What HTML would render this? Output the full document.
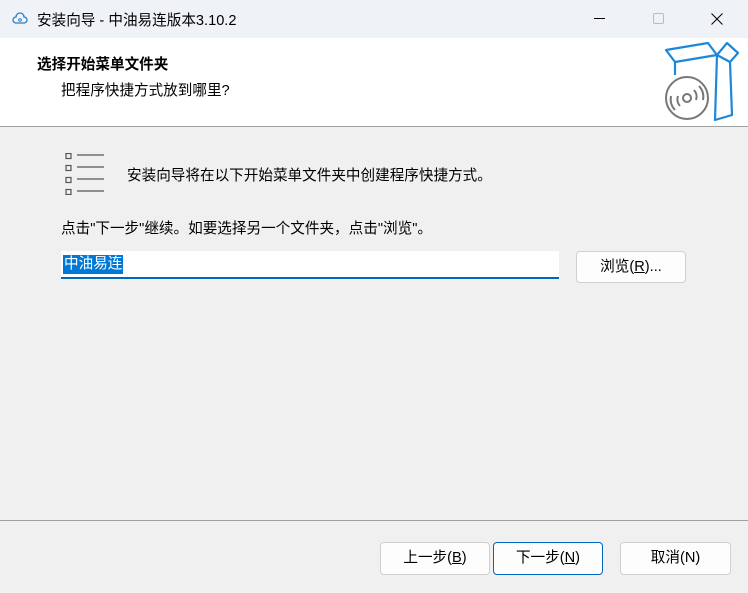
<!DOCTYPE html><html><head><meta charset="utf-8"><style>
*{margin:0;padding:0;box-sizing:border-box}
body{width:748px;height:593px;background:#f0f0f0;font-family:"Liberation Sans","Noto Sans CJK SC",sans-serif;font-size:14.6px;color:#000;position:relative;overflow:hidden}
.a{position:absolute;white-space:nowrap}
.btn{position:absolute;background:#fdfdfd;border:1px solid #d0d0d0;border-radius:4px;text-align:center;line-height:30px;font-size:14.6px}
</style></head><body>
<div class="a" style="left:0;top:0;width:748px;height:38px;background:#eff2f7"></div>
<svg class="a" style="left:12px;top:11px" width="16" height="16" viewBox="0 0 16 16"><path d="M4 12a3 3 0 0 1 0-6a4 4 0 0 1 8 0a3 3 0 0 1 0 6z" fill="none" stroke="#2a7fc9" stroke-width="1.3"/><circle cx="8" cy="9" r="1.3" fill="none" stroke="#2a7fc9"/></svg>
<div class="a" style="left:37px;top:9px">安装向导 - 中油易连版本3.10.2</div>
<div class="a" style="left:594px;top:18px;width:11px;height:1px;background:#000"></div>
<div class="a" style="left:653px;top:13px;width:11px;height:11px;border:1px solid #bbb;border-radius:2px"></div>
<svg class="a" style="left:711px;top:13px" width="12" height="12"><path d="M0.5 0.5L11.5 11.5M11.5 0.5L0.5 11.5" stroke="#000" stroke-width="1"/></svg>
<div class="a" style="left:0;top:38px;width:748px;height:89px;background:#fff;border-bottom:1px solid #a0a0a0"></div>
<div class="a" style="left:37px;top:53px;font-weight:bold">选择开始菜单文件夹</div>
<div class="a" style="left:61px;top:79px">把程序快捷方式放到哪里?</div>
<svg class="a" style="left:660px;top:38px" width="88" height="88" viewBox="0 0 88 88"><g fill="none" stroke="#1e88d8" stroke-width="2.2" stroke-linejoin="round"><path d="M6 12L48 5L57 17L15 24Z"/><path d="M57 17L67 5L78 15L70 24Z"/><path d="M57 17L55 82L72 77L70 24"/><path d="M15 24L15 37"/></g><g fill="none" stroke="#777" stroke-width="2"><circle cx="27" cy="60" r="21" fill="#fff"/><circle cx="27" cy="60" r="4"/><path d="M20 68a10 10 0 0 1-2-10M15 72a16 16 0 0 1-4-14M34 52a10 10 0 0 1 2 10M39 48a16 16 0 0 1 4 14"/></g></svg>
<svg class="a" style="left:64px;top:153px" width="42" height="42"><g fill="none" stroke="#555" stroke-width="1.2"><rect x="2" y="0.5" width="5" height="5"/><rect x="2" y="12.5" width="5" height="5"/><rect x="2" y="24.5" width="5" height="5"/><rect x="2" y="36.5" width="5" height="5"/></g><g stroke="#555" stroke-width="1.2"><path d="M13 2H40M13 14H40M13 26H40M13 38H40"/></g></svg>
<div class="a" style="left:127px;top:164px">安装向导将在以下开始菜单文件夹中创建程序快捷方式。</div>
<div class="a" style="left:61px;top:217px">点击"下一步"继续。如要选择另一个文件夹，点击"浏览"。</div>
<div class="a" style="left:61px;top:251px;width:498px;height:28px;background:#fff;border-bottom:2px solid #0067c0"></div>
<div class="a" style="left:63px;top:255px;background:#0078d7;color:#fff;padding:0 1px;line-height:19px">中油易连</div>
<div class="btn" style="left:576px;top:251px;width:110px;height:32px">浏览(<u>R</u>)...</div>
<div class="a" style="left:0;top:520px;width:748px;height:1px;background:#a0a0a0"></div>
<div class="btn" style="left:380px;top:542px;width:110px;height:33px">上一步(<u>B</u>)</div>
<div class="btn" style="left:493px;top:542px;width:110px;height:33px;border-color:#0067c0">下一步(<u>N</u>)</div>
<div class="btn" style="left:620px;top:542px;width:111px;height:33px">取消(N)</div>
</body></html>
